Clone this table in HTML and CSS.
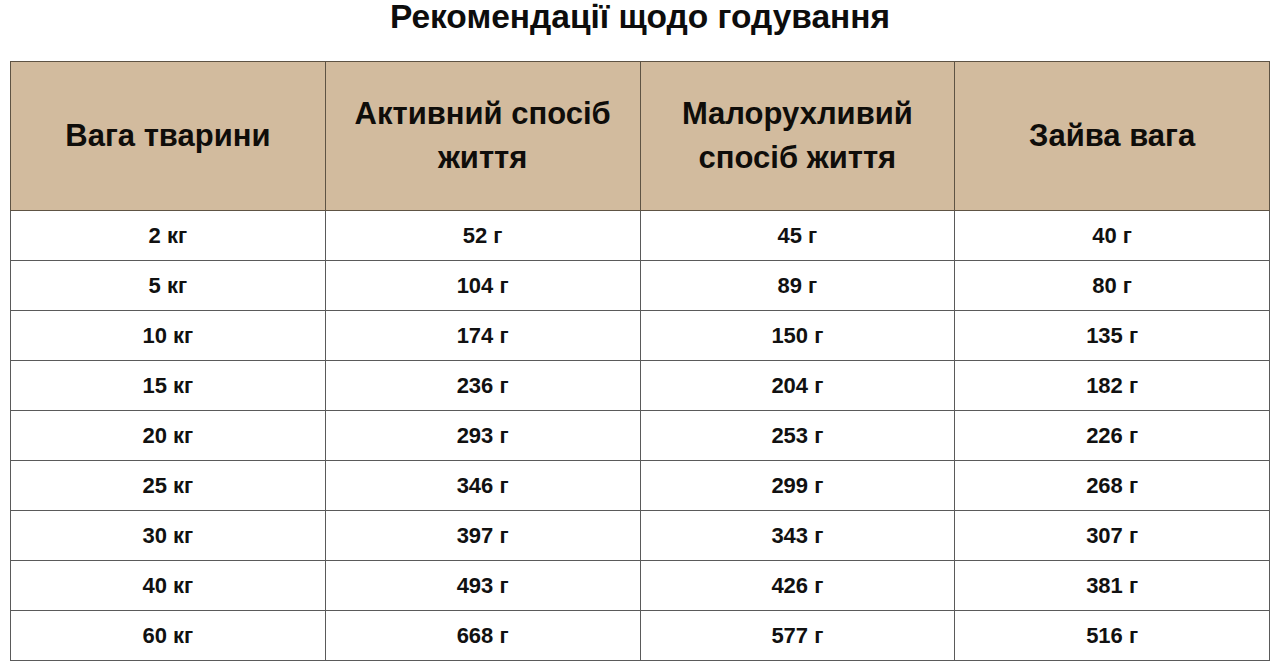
FILE: index.html
```html
<!DOCTYPE html>
<html lang="uk">
<head>
<meta charset="utf-8">
<link rel="stylesheet" href="styles.css">
</head>
<body>
<h1 class="title">Рекомендації щодо годування</h1>
<table class="feed">
<thead>
<tr><th>Вага тварини</th><th>Активний спосіб<br>життя</th><th>Малорухливий<br>спосіб життя</th><th>Зайва вага</th></tr>
</thead>
<tbody>
<tr><td>2 кг</td><td>52 г</td><td>45 г</td><td>40 г</td></tr>
<tr><td>5 кг</td><td>104 г</td><td>89 г</td><td>80 г</td></tr>
<tr><td>10 кг</td><td>174 г</td><td>150 г</td><td>135 г</td></tr>
<tr><td>15 кг</td><td>236 г</td><td>204 г</td><td>182 г</td></tr>
<tr><td>20 кг</td><td>293 г</td><td>253 г</td><td>226 г</td></tr>
<tr><td>25 кг</td><td>346 г</td><td>299 г</td><td>268 г</td></tr>
<tr><td>30 кг</td><td>397 г</td><td>343 г</td><td>307 г</td></tr>
<tr><td>40 кг</td><td>493 г</td><td>426 г</td><td>381 г</td></tr>
<tr><td>60 кг</td><td>668 г</td><td>577 г</td><td>516 г</td></tr>
</tbody>
</table>
</body>
</html>
```
FILE: styles.css
```css
html, body { margin: 0; padding: 0; background: #fff; }
body {
  font-family: "Liberation Sans", Arial, sans-serif;
  color: #111;
  padding: 0 10px;
}
.title {
  margin: 0;
  height: 61px;
  line-height: 34px;
  font-size: 33.5px;
  font-weight: bold;
  text-align: center;
  color: #0d0d0d;
}
.feed {
  width: 1260px;
  border-collapse: collapse;
  table-layout: fixed;
  border: 1px solid #4a4a4a;
}
.feed th, .feed td {
  width: 25%;
  text-align: center;
  font-weight: bold;
  padding: 0;
}
.feed th {
  background: #d2bb9e;
  height: 148px;
  font-size: 31px;
  line-height: 44px;
  border: 1px solid #5e5344;
  color: #0f0d0a;
}
.feed td {
  height: 49px;
  font-size: 22px;
  border: 1px solid #5a5a5a;
  color: #111;
}
```
